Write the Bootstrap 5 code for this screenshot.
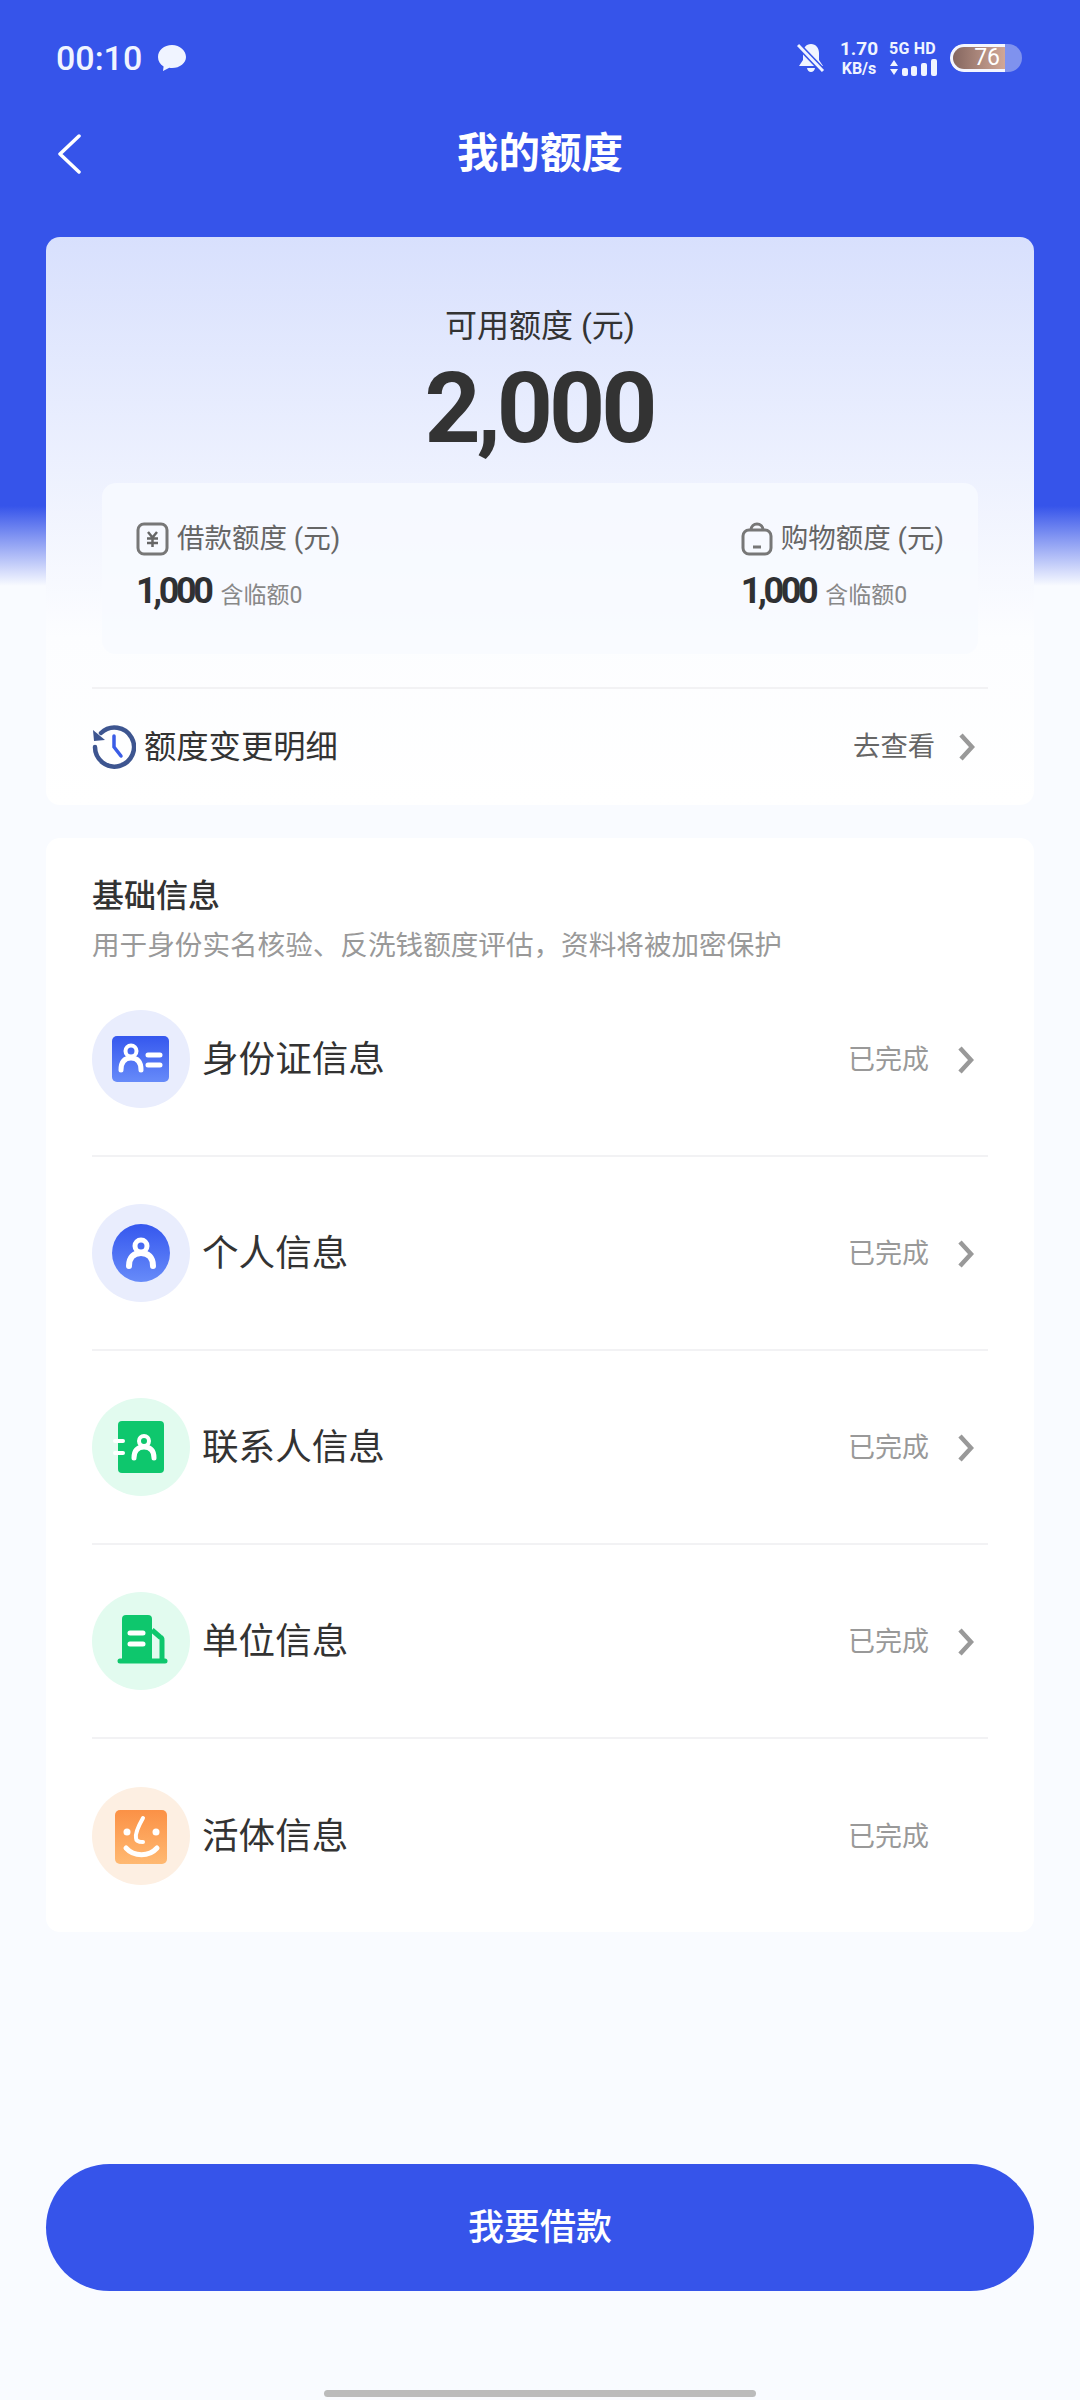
<!DOCTYPE html>
<html lang="zh-CN">
<head>
<meta charset="UTF-8">
<meta name="viewport" content="width=device-width, initial-scale=1.0">
<title>我的额度</title>
<link href="https://cdn.jsdelivr.net/npm/bootstrap@5.3.0/dist/css/bootstrap.min.css" rel="stylesheet">
<style>
body {
    width: 1080px;
    height: 2400px;
    overflow: hidden;
    font-family: Roboto, "Noto Sans CJK SC", sans-serif;
    color: #333;
    background: linear-gradient(180deg, #3654ea 0, #3654ea 506px, #f9fbff 586px);
}
.page { height: 2400px; }
.status-bar { height: 116px; padding: 0 58px 0 56px; color: #f0f4ff; }
.status-time { font-size: 34px; font-weight: 500; }
.bubble-icon { margin-left: 15px; }
.net-speed { width: 44px; margin-left: 12px; line-height: 1; text-align: center; }
.net-speed b { display: block; font-size: 19px; font-weight: 700; }
.net-speed span { display: block; font-size: 16px; font-weight: 700; margin-top: 3px; }
.net-sim { width: 52px; margin-left: 8px; line-height: 1; }
.net-sim b { display: block; font-size: 16px; font-weight: 700; white-space: nowrap; margin-bottom: 2px; letter-spacing: .2px; }
.batt { width: 72px; height: 28px; margin-left: 9px; border-radius: 14px; background: #7f92ee; overflow: hidden; }
.batt-fill { width: 55px; height: 28px; border: 3px solid #f4f6ff; border-right: 0; border-radius: 14px 0 0 14px; background: linear-gradient(90deg, #856760, #d1a797); color: #fff; font-size: 23px; line-height: 22px; text-align: right; padding-right: 5px; }
.top-nav { height: 76px; padding-left: 56px; }
.top-title { position: absolute; left: 0; right: 0; text-align: center; color: #fff; font-size: 41.5px; font-weight: 700; line-height: 76px; }
.sheet { margin: 0 46px; border: 0; border-radius: 14px; }
.sheet-quota { margin-top: 45px; height: 568px; padding-top: 67px; background: linear-gradient(180deg, #d8e0fd 0, #fcfdff 400px, #fff 100%); }
.quota-label { font-size: 32px; line-height: 44px; text-align: center; }
.quota-num { font-size: 98px; font-weight: 700; line-height: 100px; text-align: center; letter-spacing: -4px; margin-top: 11px; padding-right: 2px; }
.quota-panel { height: 171px; flex: none; margin: 24px 56px 0; padding: 39px 34px 0 34px; border-radius: 14px; background: rgba(248, 250, 255, .8); }
.sub-label { font-size: 27.5px; line-height: 34px; color: #666; gap: 8px; }
.sub-value { margin-top: 15px; line-height: 40px; }
.sub-value b { font-size: 36px; font-weight: 700; letter-spacing: -3.4px; color: #2f3033; }
.sub-value span { font-size: 23px; color: #888; margin-left: 10px; }
.detail-row { height: 116px; flex: none; margin: 33px 46px 0; border-top: 2px solid #f2f2f4; padding: 2px 13px 0 0; }
.detail-name { font-size: 32.3px; margin-left: 8px; }
.row-hint { font-size: 27.3px; color: #666; margin-right: 23px; }
.sheet-info { margin-top: 33px; height: 1094px; padding: 0 46px; background: #fff; }
.info-head { height: 125px; flex: none; padding-top: 37px; }
.info-title { font-size: 32px; font-weight: 500; line-height: 42px; }
.info-sub { font-size: 27.6px; line-height: 38px; margin-top: 10px; color: #999; white-space: nowrap; }
.info-list { flex: none; }
.info-list .list-group-item { height: 194px; padding: 0 14px 0 0; border-color: #f2f2f4; border-width: 0 0 2px; background: transparent; }
.info-list .list-group-item:last-child { border-bottom: 0; }
.info-icon { width: 98px; height: 98px; flex: none; }
.info-name { font-size: 36.6px; color: #333; margin-left: 12px; padding-top: 3px; }
.info-state { font-size: 27px; color: #999; margin-right: 28px; padding-top: 3px; }
.row-arrow { margin-top: 2px; }
.state-gap { width: 17px; }
.footer-wrap { padding: 0 46px; }
.btn-loan { height: 127px; border: 0; font-size: 36px; font-weight: 500; color: #fff; background: #3654ea; border-radius: 64px; }
.home-bar { width: 432px; height: 7px; margin: 99px auto 3px; background: #bbb; border-radius: 4px; }
</style>
</head>
<body>
<div class="page d-flex flex-column">

    <div class="status-bar d-flex align-items-center">
        <span class="status-time">00:10</span>
        <svg class="bubble-icon" width="30" height="28" viewBox="0 0 30 28"><path d="M15 1C7 1 1 6.300 1 13c0 4 2.200 7.400 5.600 9.500L6 27l6.300-3.300c.9.200 1.800.3 2.700.3 8 0 14-5 14-11S23 1 15 1z" fill="#f0f4ff"/></svg>
        <svg class="ms-auto" width="28" height="30" viewBox="0 0 28 30"><path d="M14 1c-5 0-8 4-8 9v7l-4 6h24l-4-6v-7c0-5-3-9-8-9zM10 25c.5 2.500 2 4 4 4s3.500-1.500 4-4z" fill="#f0f4ff"/><path d="M1 2l25 26" stroke="#3654ea" stroke-width="6"/><path d="M1 2l25 26" stroke="#f0f4ff" stroke-width="3"/></svg>
        <div class="net-speed"><b>1.70</b><span>KB/s</span></div>
        <div class="net-sim">
            <b>5G HD</b>
            <svg class="d-block" width="50" height="17" viewBox="0 0 50 17"><path d="M1 7l4-6 4 6zM1 10h8l-4 6z" fill="#f0f4ff"/><g fill="#f0f4ff"><rect x="13" y="9" width="6" height="8" rx="2"/><rect x="22" y="7" width="6" height="10" rx="2"/><rect x="32" y="4" width="6" height="13" rx="2"/><rect x="42" y="0" width="6" height="17" rx="2"/></g></svg>
        </div>
        <div class="batt"><div class="batt-fill">76</div></div>
    </div>

    <div class="top-nav position-relative d-flex align-items-center">
        <div class="top-title">我的额度</div>
        <svg class="position-relative" width="26" height="40" viewBox="0 0 26 40"><path d="M23 2L4 20l19 18" fill="none" stroke="#fff" stroke-width="3.500" stroke-linecap="round" stroke-linejoin="round"/></svg>
    </div>

    <div class="card sheet sheet-quota">
        <div class="quota-label">可用额度 (元)</div>
        <div class="quota-num">2,000</div>
        <div class="quota-panel d-flex justify-content-between">
            <div>
                <div class="sub-label d-flex align-items-center">
                    <svg width="33" height="34" viewBox="0 0 33 34"><rect x="2" y="2" width="29" height="30" rx="6" fill="none" stroke="#777" stroke-width="3"/><path d="M12 10l4.500 5.500 4.500-5.500M11 16.500h11M11 21h11M16.500 15v10" fill="none" stroke="#666" stroke-width="2.500"/></svg>
                    <span>借款额度 (元)</span>
                </div>
                <div class="sub-value"><b>1,000</b><span>含临额0</span></div>
            </div>
            <div>
                <div class="sub-label d-flex align-items-center">
                    <svg width="32" height="34" viewBox="0 0 32 34"><rect x="2" y="8" width="28" height="24" rx="6" fill="none" stroke="#777" stroke-width="3"/><path d="M10 8c0-8 12-8 12 0M12 25h8" fill="none" stroke="#777" stroke-width="3"/></svg>
                    <span>购物额度 (元)</span>
                </div>
                <div class="sub-value"><b>1,000</b><span>含临额0</span></div>
            </div>
        </div>
        <div class="detail-row d-flex align-items-center">
            <svg width="44" height="44" viewBox="0 0 44 44"><path d="M9 8A19.500 19.500 0 1 1 3 22" fill="none" stroke="#3d5590" stroke-width="4.500" stroke-linecap="round"/><path d="M1 5l1 11 11-1z" fill="#3d5590"/><path d="M22 11v11l7 9" fill="none" stroke="#3a5ce6" stroke-width="3.500" stroke-linecap="round"/></svg>
            <span class="detail-name">额度变更明细</span>
            <span class="row-hint ms-auto">去查看</span>
            <svg width="17" height="30" viewBox="0 0 17 30"><path d="M3 3l11 12L3 27" fill="none" stroke="#999" stroke-width="4.500"/></svg>
        </div>
    </div>

    <div class="card sheet sheet-info">
        <div class="info-head">
            <div class="info-title">基础信息</div>
            <div class="info-sub">用于身份实名核验、反洗钱额度评估，资料将被加密保护</div>
        </div>
        <ul class="list-group list-group-flush info-list">
            <li class="list-group-item d-flex align-items-center">
                <svg class="info-icon" viewBox="0 0 98 98">
                    <defs><linearGradient id="gb" x1="0" y1="0" x2="0" y2="1"><stop offset="0" stop-color="#3557ee"/><stop offset="1" stop-color="#678bf9"/></linearGradient></defs>
                    <circle cx="49" cy="49" r="49" fill="#e9edfd"/>
                    <rect x="20" y="26" width="57" height="46" rx="5" fill="url(#gb)"/>
                    <circle cx="39" cy="41" r="5.500" fill="none" stroke="#fff" stroke-width="4"/>
                    <path d="M29 60c0-9 4-12 10-12s10 3 10 12" fill="none" stroke="#fff" stroke-width="5" stroke-linecap="round"/>
                    <path d="M56 45h12M56 55h12" stroke="#fff" stroke-width="5" stroke-linecap="round"/>
                </svg>
                <span class="info-name">身份证信息</span>
                <span class="info-state ms-auto">已完成</span>
                <svg class="row-arrow" width="17" height="30" viewBox="0 0 17 30"><path d="M3 3l11 12L3 27" fill="none" stroke="#999" stroke-width="4.500"/></svg>
            </li>
            <li class="list-group-item d-flex align-items-center">
                <svg class="info-icon" viewBox="0 0 98 98">
                    <circle cx="49" cy="49" r="49" fill="#e9edfd"/>
                    <circle cx="49" cy="49" r="29" fill="url(#gb)"/>
                    <circle cx="49" cy="42" r="6" fill="none" stroke="#fff" stroke-width="5"/>
                    <path d="M37 62c0-9 5-13 12-13s12 4 12 13" fill="none" stroke="#fff" stroke-width="6" stroke-linecap="round"/>
                </svg>
                <span class="info-name">个人信息</span>
                <span class="info-state ms-auto">已完成</span>
                <svg class="row-arrow" width="17" height="30" viewBox="0 0 17 30"><path d="M3 3l11 12L3 27" fill="none" stroke="#999" stroke-width="4.500"/></svg>
            </li>
            <li class="list-group-item d-flex align-items-center">
                <svg class="info-icon" viewBox="0 0 98 98">
                    <circle cx="49" cy="49" r="49" fill="#e2fbef"/>
                    <rect x="26" y="23" width="46" height="52" rx="4" fill="#0ec76d"/>
                    <path d="M23 43h8M23 55h8" stroke="#fff" stroke-width="4" stroke-linecap="round"/>
                    <circle cx="52" cy="43" r="5" fill="none" stroke="#fff" stroke-width="4"/>
                    <path d="M42 60c0-8 4-11 10-11s10 3 10 11" fill="none" stroke="#fff" stroke-width="5" stroke-linecap="round"/>
                </svg>
                <span class="info-name">联系人信息</span>
                <span class="info-state ms-auto">已完成</span>
                <svg class="row-arrow" width="17" height="30" viewBox="0 0 17 30"><path d="M3 3l11 12L3 27" fill="none" stroke="#999" stroke-width="4.500"/></svg>
            </li>
            <li class="list-group-item d-flex align-items-center">
                <svg class="info-icon" viewBox="0 0 98 98">
                    <circle cx="49" cy="49" r="49" fill="#e2fbef"/>
                    <path d="M30 27a4 4 0 0 1 4-4h22a4 4 0 0 1 4 4v43H30z" fill="#0ec76d"/>
                    <path d="M60 38l8 7a3 3 0 0 1 2 3v21" fill="none" stroke="#0ec76d" stroke-width="5"/>
                    <path d="M28 69h45" stroke="#0ec76d" stroke-width="5" stroke-linecap="round"/>
                    <path d="M38 41h13M38 52h13" stroke="#fff" stroke-width="5" stroke-linecap="round"/>
                </svg>
                <span class="info-name">单位信息</span>
                <span class="info-state ms-auto">已完成</span>
                <svg class="row-arrow" width="17" height="30" viewBox="0 0 17 30"><path d="M3 3l11 12L3 27" fill="none" stroke="#999" stroke-width="4.500"/></svg>
            </li>
            <li class="list-group-item d-flex align-items-center">
                <svg class="info-icon" viewBox="0 0 98 98">
                    <defs><linearGradient id="go" x1="0" y1="0" x2="0" y2="1"><stop offset="0" stop-color="#fb9146"/><stop offset="1" stop-color="#ffb972"/></linearGradient></defs>
                    <circle cx="49" cy="49" r="49" fill="#fdefe2"/>
                    <rect x="23" y="23" width="52" height="54" rx="5" fill="url(#go)"/>
                    <circle cx="35" cy="45" r="3.500" fill="#fff"/>
                    <circle cx="64" cy="45" r="3.500" fill="#fff"/>
                    <path d="M51 31c-4 7-8 15-7 20 0 3 3 4 7 4" fill="none" stroke="#fff" stroke-width="4" stroke-linecap="round"/>
                    <path d="M34 61c8 9 23 9 31 0" fill="none" stroke="#fff" stroke-width="5" stroke-linecap="round"/>
                </svg>
                <span class="info-name">活体信息</span>
                <span class="info-state ms-auto">已完成</span>
                <span class="state-gap"></span>
            </li>
        </ul>
    </div>

    <div class="footer-wrap mt-auto">
        <button type="button" class="btn btn-loan w-100">我要借款</button>
    </div>
    <div class="home-bar"></div>
</div>
<script src="https://cdn.jsdelivr.net/npm/bootstrap@5.3.0/dist/js/bootstrap.bundle.min.js"></script>
</body>
</html>
